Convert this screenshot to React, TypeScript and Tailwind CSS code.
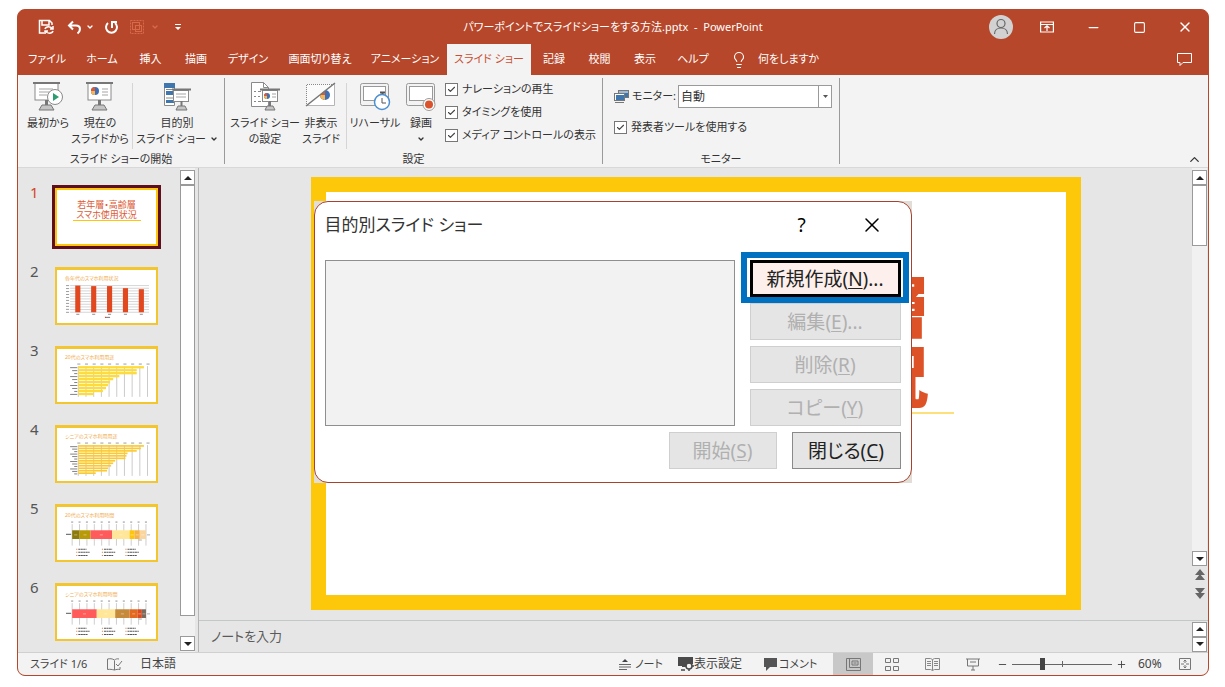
import React, { useState } from 'react';
import { Check, ChevronDown, ChevronUp, Lightbulb, Minus, Plus, Square, X } from 'lucide-react';

type Segment = { x: number; w: number; color: string };

const tabs = [
  { label: 'ファイル', width: 'w-[58px]' },
  { label: 'ホーム', width: 'w-[52px]' },
  { label: '挿入', width: 'w-[45px]' },
  { label: '描画', width: 'w-[46px]' },
  { label: 'デザイン', width: 'w-[58px]' },
  { label: '画面切り替え', width: 'w-[86px]' },
  { label: 'アニメーション', width: 'w-[84px]' },
  { label: 'スライド ショー', width: 'w-[84px]', active: true },
  { label: '記録', width: 'w-[46px]' },
  { label: '校閲', width: 'w-[45px]' },
  { label: '表示', width: 'w-[46px]' },
  { label: 'ヘルプ', width: 'w-[50px]' },
];

/* ---------- Ribbon icons ---------- */

const Pie = ({ cx, cy, r }: { cx: number; cy: number; r: number }) => (
  <g>
    <circle cx={cx} cy={cy} r={r} fill="#3f6fb5" />
    <path d={`M${cx} ${cy}V${cy - r}A${r} ${r} 0 0 0 ${cx} ${cy + r}Z`} fill="#d95a3b" />
    <path d={`M${cx} ${cy}H${cx - r}A${r} ${r} 0 0 0 ${cx} ${cy + r}Z`} fill="#f0b95a" />
  </g>
);

const Easel = () => (
  <g>
    <rect x="3" y="2" width="23" height="17" fill="#fff" stroke="#8a8a8a" />
    <rect x="1" y="1" width="27" height="2" fill="#777" />
    <path d="M14.500 19v6" stroke="#777" strokeWidth="3" />
    <path d="M10 24h9l3 5H7z" fill="#c4c4c4" stroke="#777" />
  </g>
);

const FromStartIcon = () => (
  <svg width="32" height="30" viewBox="0 0 32 30" fill="none">
    <Easel />
    <path d="M7 8h14M7 11h11M7 14h8" stroke="#a5a5a5" />
    <circle cx="23" cy="16" r="7.500" fill="#fff" stroke="#8a8a8a" />
    <path d="M21 12l6 4-6 4z" fill="#2f9b72" />
  </svg>
);

const FromCurrentIcon = () => (
  <svg width="30" height="30" viewBox="0 0 30 30" fill="none">
    <Easel />
    <Pie cx={10} cy={10} r={4} />
    <path d="M17 8h6M17 11h6M17 14h6" stroke="#a5a5a5" />
  </svg>
);

const CustomShowIcon = () => (
  <svg width="30" height="30" viewBox="0 0 30 30" fill="none">
    <path d="M2.500 2.500h10v22h-10z" fill="#fff" stroke="#8a8a8a" />
    <path d="M2 2h11v5H2zM4 10h8v4H4zM4 19h8v3H4z" fill="#3f76ad" />
    <path d="M4 8.500h8M4 17h8" stroke="#8a8a8a" />
    <rect x="11.500" y="9.500" width="15" height="11" fill="#fff" stroke="#8a8a8a" />
    <path d="M10 8.500h19" stroke="#777" strokeWidth="2" />
    <path d="M14 13h10M14 16h10" stroke="#a5a5a5" />
    <path d="M19.500 20v5" stroke="#777" strokeWidth="2" />
    <path d="M16 25h7l2 4H14z" fill="#c4c4c4" stroke="#777" />
  </svg>
);

const SetupIcon = () => (
  <svg width="32" height="30" viewBox="0 0 32 30" fill="none">
    <path d="M2.500 1.500h12l5 5v19h-17z" fill="#fff" stroke="#8a8a8a" />
    <path d="M14.500 1.500v5h5" stroke="#8a8a8a" />
    <path d="M5 10.500h2M5 15.500h2M5 20.500h2M9 10.500h3M9 15.500h2M9 20.500h3" stroke="#888" />
    <rect x="13.500" y="9.500" width="15" height="11" fill="#fff" stroke="#8a8a8a" />
    <path d="M11 8.500h20" stroke="#777" strokeWidth="2" />
    <Pie cx={18} cy={15} r={3} />
    <path d="M23 13h4M23 16h4" stroke="#a5a5a5" />
    <path d="M21 20v5" stroke="#777" strokeWidth="2" />
    <path d="M18 25h6l2 4H16z" fill="#c4c4c4" stroke="#777" />
  </svg>
);

const HideSlideIcon = () => (
  <svg width="32" height="30" viewBox="0 0 32 30" fill="none">
    <path d="M2 3h28v22H2z" fill="#fff" />
    <Pie cx={20} cy={14} r={5} />
    <path d="M2 3h26L2 24z" fill="#fafafa" />
    <path d="M1.500 25V3.500H29" stroke="#888" strokeDasharray="1 1" />
    <path d="M29.500 3v21.500H2" stroke="#b5b5b5" />
    <path d="M1 25L30 2" stroke="#777" strokeWidth="1.500" />
  </svg>
);

const RehearseIcon = () => (
  <svg width="32" height="30" viewBox="0 0 32 30" fill="none">
    <rect x="1.500" y="2.500" width="28" height="22" rx="2" fill="#f3f3f3" stroke="#999" />
    <rect x="4.500" y="5.500" width="22" height="14" fill="#fff" stroke="#999" />
    <path d="M21 11.500h5M23.500 12v3" stroke="#555" strokeWidth="2" />
    <circle cx="23" cy="21" r="7.500" fill="#fff" stroke="#4b8fd0" strokeWidth="1.500" />
    <path d="M23 17v5h4" stroke="#555" />
  </svg>
);

const RecordIcon = () => (
  <svg width="32" height="30" viewBox="0 0 32 30" fill="none">
    <rect x="1.500" y="2.500" width="28" height="22" rx="2" fill="#f3f3f3" stroke="#999" />
    <rect x="4.500" y="5.500" width="23" height="14" fill="#fff" stroke="#999" />
    <circle cx="24" cy="23.500" r="6" fill="#fff" stroke="#999" />
    <circle cx="24" cy="23.500" r="4" fill="#d9532c" />
  </svg>
);

const MonitorsIcon = () => (
  <svg width="15" height="15" viewBox="0 0 15 15" fill="none">
    <rect x="4.500" y="1.500" width="10" height="7" fill="#3f76ad" stroke="#777" />
    <path d="M5 3h9" stroke="#fff" />
    <rect x="1.500" y="5.500" width="9" height="6" fill="#3f76ad" stroke="#fff" />
    <rect x=".5" y="4.500" width="10" height="7" stroke="#777" />
    <path d="M1 13.500h9" stroke="#777" />
  </svg>
);

/* ---------- Small building blocks ---------- */

const RibbonButton = ({ icon, lines, width, menu }: { icon: React.ReactNode; lines: string[]; width: string; menu?: boolean }) => (
  <button className={`flex shrink-0 flex-col items-center whitespace-nowrap text-[11px] leading-4 text-[#333] ${width}`}>
    {icon}
    <span className="mt-1 flex flex-col items-center">
      {lines.map((line, index) => (
        <span key={line} className="flex items-center gap-1">
          {line}
          {menu && lines.length > 1 && index === lines.length - 1 && <ChevronDown size={8} strokeWidth={4} />}
        </span>
      ))}
      {menu && lines.length === 1 && <ChevronDown size={8} strokeWidth={4} className="mt-1" />}
    </span>
  </button>
);

const CheckOption = ({ label }: { label: string }) => {
  const [checked, setChecked] = useState(true);
  return (
    <label className="flex h-[23px] items-center gap-1 whitespace-nowrap text-[11px]">
      <span className="relative flex">
        <input
          type="checkbox"
          checked={checked}
          onChange={() => setChecked(!checked)}
          className="h-[13px] w-[13px] appearance-none border border-[#777] bg-white"
        />
        {checked && <Check size={9} strokeWidth={3} className="pointer-events-none absolute left-0.5 top-0.5 text-[#444]" />}
      </span>
      {label}
    </label>
  );
};

const ScrollButton = ({ up, label }: { up?: boolean; label: string }) => (
  <button aria-label={label} className="flex h-[15px] w-[15px] items-center justify-center border border-[#9a9a9a] bg-white">
    <svg width="8" height="4" viewBox="0 0 8 4">
      <path d={up ? 'M0 4L4 0l4 4z' : 'M0 0l4 4 4-4z'} fill="#222" />
    </svg>
  </button>
);

const RibbonGroup = ({ title, width, children }: { title: string; width: string; children: React.ReactNode }) => (
  <section className={`flex shrink-0 ${width}`}>
    <div className="flex min-w-0 flex-1 flex-col">
      <div className="flex h-[77px] pt-1.5">{children}</div>
      <h2 className="text-center text-[11px] leading-4">{title}</h2>
    </div>
    <div className="my-[3px] w-px bg-[#9a9a9a]" />
  </section>
);

/* ---------- Thumbnails ---------- */

const axis = [0, 1, 2, 3, 4, 5, 6, 7, 8, 9];

const ColumnChart = () => (
  <svg viewBox="0 0 95 40" className="w-full">
    {[...axis, 10].map(i => (
      <path key={i} d={`M12 ${3.500 + i * 2.600}h77`} stroke="#bbb" strokeWidth=".6" />
    ))}
    {axis.map(i => (
      <path key={i} d={`M8 ${3.500 + i * 2.900}h3`} stroke="#888" strokeWidth=".8" />
    ))}
    {[3.500, 4, 4, 6, 7].map((y, i) => (
      <g key={i}>
        <rect x={17 + i * 15.500} y={y} width="5" height={29.500 - y} fill="#e2481f" />
        <path d={`M${18 + i * 15.500} 31.500h3`} stroke="#777" strokeWidth=".8" />
      </g>
    ))}
    <path d="M46 34.500h1" stroke="#e2481f" />
    <path d="M47 34.500h4" stroke="#777" />
  </svg>
);

const BarChart = ({ bars, height, color }: { bars: number[]; height: number; color: string }) => (
  <svg viewBox="0 0 95 40" className="w-full">
    {axis.map(i => (
      <g key={i}>
        <path d={`M${20 + i * 7.500} 5v30`} stroke="#aaa" strokeWidth=".6" />
        <path d={`M${19 + i * 7.500} 3h3`} stroke="#888" strokeWidth=".8" />
      </g>
    ))}
    {bars.map((w, i) => (
      <g key={i}>
        <path d={`M${12 + (i % 3) * 2} ${6.500 + i * (29 / bars.length)}h${7 - (i % 3) * 2}`} stroke="#777" strokeWidth=".9" />
        <rect x="20" y={5 + i * (29 / bars.length)} width={w} height={height} fill={color} />
      </g>
    ))}
  </svg>
);

const StackedChart = ({ segments }: { segments: Segment[] }) => (
  <svg viewBox="0 0 95 40" className="w-full">
    {axis.concat(10).map(i => (
      <g key={i}>
        <path d={`M${14 + i * 7.200} 5v21`} stroke="#bbb" strokeWidth=".7" />
        <path d={`M${13 + i * 7.200} 3h2`} stroke="#777" strokeWidth=".8" />
      </g>
    ))}
    <path d="M8 15h5" stroke="#777" />
    {segments.map(s => (
      <g key={s.x}>
        <rect x={s.x + 1} y="11" width={s.w} height="8.500" fill={s.color} />
        <path d={`M${s.x + s.w / 2 - 0.500} 15.500h3`} stroke="#fff" strokeOpacity=".5" strokeWidth=".8" />
      </g>
    ))}
    <path d="M87 15.500h3M79 20.500h3" stroke="#999" strokeWidth=".8" />
    {[18, 43, 66].map(x => (
      <path key={x} d={`M${x + 2} 29.500h8M${x + 2} 32.500h11M${x + 2} 35.500h9`} stroke="#555" strokeDasharray="2 .4" />
    ))}
    {[18, 43, 66].map(x => (
      <path key={x} d={`M${x} 29.500h1M${x} 32.500h1M${x} 35.500h1`} stroke="#d9783c" />
    ))}
  </svg>
);

const youngSegments: Segment[] = [
  { x: 13, w: 7, color: '#8c7a0c' },
  { x: 20, w: 11, color: '#b89a08' },
  { x: 31, w: 21, color: '#ff5b5b' },
  { x: 52, w: 17, color: '#ffe699' },
  { x: 69, w: 5, color: '#fdc60c' },
  { x: 74, w: 5, color: '#f5b24a' },
  { x: 79, w: 6, color: '#f9d5a0' },
];

const seniorSegments: Segment[] = [
  { x: 13, w: 24, color: '#ff5b5b' },
  { x: 37, w: 18, color: '#ffe699' },
  { x: 55, w: 14, color: '#c58a3c' },
  { x: 69, w: 8, color: '#e2691f' },
  { x: 77, w: 4, color: '#dd4a20' },
  { x: 81, w: 4, color: '#7c6a5c' },
];

const thumbnails = [
  { title: '各年代のスマホ利用状況', chart: <ColumnChart /> },
  { title: '20代のスマホ利用用途', chart: <BarChart bars={[64, 57, 57, 40, 34, 31, 29, 27, 24, 15]} height={2.200} color="#fddb3a" /> },
  { title: 'シニアのスマホ利用用途', chart: <BarChart bars={[64, 61, 57, 48, 47, 46, 36, 34, 32, 29, 28, 17]} height={1.600} color="#fdc92c" /> },
  { title: '20代のスマホ利用時間', chart: <StackedChart segments={youngSegments} /> },
  { title: 'シニアのスマホ利用時間', chart: <StackedChart segments={seniorSegments} /> },
];

const SlidePanel = () => (
  <aside className="flex w-[181px] shrink-0 border-r border-[#b5b5b5]">
    <ol className="flex flex-1 flex-col gap-[21px] pl-3 pt-5 text-[15px] leading-[9px] text-[#555]">
      <li className="flex h-[58px] gap-[15px] text-[#d24726]">
        <span className="w-2.5">1</span>
        <button className="h-[58px] w-[103px] border-2 border-[#fdc60c] bg-white pb-3.5 text-[9px] leading-[10px] text-[#dd5a35] outline-3 outline-[#5e0f1a]">
          <span className="block">若年層・高齢層</span>
          <span className="mx-auto block w-[68px] border-b border-[#fdc60c]">スマホ使用状況</span>
        </button>
      </li>
      {thumbnails.map((slide, index) => (
        <li key={slide.title} className="flex h-[58px] gap-[15px]">
          <span className="w-2.5">{index + 2}</span>
          <button className="flex h-[58px] w-[103px] flex-col items-start border-2 border-t-3 border-[#f3c62f] bg-white pt-1">
            <span className="whitespace-nowrap pl-2 text-[5px] leading-[8px] text-[#f0ab4c]">{slide.title}</span>
            {slide.chart}
          </button>
        </li>
      ))}
    </ol>
    <div className="mr-[3px] flex w-[15px] flex-col bg-[#f1f1f1] pb-px pt-0.5">
      <ScrollButton up label="上へスクロール" />
      <div className="flex-1 border border-[#9a9a9a] bg-white" />
      <div className="h-5" />
      <ScrollButton label="下へスクロール" />
    </div>
  </aside>
);

/* ---------- Dialog ---------- */

const DialogButton = ({ label, shortcut, dots, disabled, width }: { label: string; shortcut: string; dots?: boolean; disabled?: boolean; width: string }) => (
  <button
    disabled={disabled}
    className={`h-[37px] whitespace-nowrap border border-[#8a8a8a] bg-[#e5e5e5] text-[19px] leading-6 text-[#222] disabled:border-[#cfcfcf] disabled:text-[#b0b0b0] ${width}`}
  >
    {label}(<u className="underline-offset-2">{shortcut}</u>){dots && '...'}
  </button>
);

const CustomShowDialog = () => (
  <div className="absolute left-[3px] top-6 w-[598px] bg-[#e3ddd8]">
    <div role="dialog" aria-label="目的別スライド ショー" className="rounded-[14px] border border-[#a8422c] bg-white px-2.5 pb-[13px]">
      <header className="mb-3 flex h-[46px] items-center pr-[17px]">
        <h1 className="flex-1 text-[17px] leading-6 text-[#333]">目的別スライド ショー</h1>
        <button className="w-5 text-[19px] leading-6">?</button>
        <button aria-label="閉じる" className="ml-12">
          <X size={24} strokeWidth={1.500} />
        </button>
      </header>
      <div className="flex gap-[15px]">
        <div role="listbox" aria-label="目的別スライド ショー" className="flex-1 border border-[#8f8f8f] bg-[#f2f2f2]" />
        <div className="flex flex-col gap-1.5">
          <div className="relative z-10">
            <button className="h-[37px] w-[151px] border-3 border-black bg-[#fdf0ec] text-[19px] leading-6 text-[#222]">
              新規作成(<u className="underline-offset-2">N</u>)...
            </button>
            <div className="pointer-events-none absolute -bottom-1.5 -left-[9px] -right-2 -top-2 border-6 border-[#0070c0]" />
          </div>
          <DialogButton label="編集" shortcut="E" dots disabled width="w-[151px]" />
          <DialogButton label="削除" shortcut="R" disabled width="w-[151px]" />
          <DialogButton label="コピー" shortcut="Y" disabled width="w-[151px]" />
        </div>
      </div>
      <footer className="mt-1.5 flex justify-end gap-[15px]">
        <DialogButton label="開始" shortcut="S" disabled width="w-[108px]" />
        <DialogButton label="閉じる" shortcut="C" width="w-[109px]" />
      </footer>
    </div>
  </div>
);

/* ---------- Page sections ---------- */

const TitleBar = () => (
  <header className="grid h-[34px] grid-cols-[1fr_auto_1fr] items-center">
    <div className="flex items-center pl-5">
      <button aria-label="保存">
        <svg width="17" height="17" viewBox="0 0 17 17" fill="none" stroke="#fff" strokeWidth="1.500">
          <path d="M6 14H1.500V1.500h10L14 4v2M4 2v4h7V2" />
          <path d="M7 10c1-3 6-3 7.500 0M15 7v3h-3M15 12c-1 3-6 3-7.500 0M7 15v-3h3" />
        </svg>
      </button>
      <button aria-label="元に戻す" className="ml-3">
        <svg width="15" height="15" viewBox="0 0 15 15" fill="none" stroke="#fff" strokeWidth="2">
          <path d="M6 1.500L2 5.500l4 4M2 5.500h7c5 0 5 5 1.500 8" />
        </svg>
      </button>
      <ChevronDown size={8} strokeWidth={4} className="ml-1 text-white" />
      <button aria-label="やり直し" className="ml-2.5">
        <svg width="15" height="15" viewBox="0 0 15 15" fill="none" stroke="#fff" strokeWidth="2">
          <path d="M4 3a5.500 5.500 0 1 0 7 0M8 8V2h5" />
        </svg>
      </button>
      <button aria-label="グループ化" className="ml-2.5">
        <svg width="16" height="16" viewBox="0 0 16 16" fill="none" stroke="#d9694b">
          <rect x="1.500" y="1.500" width="13" height="13" strokeDasharray="2 1" />
          <rect x="3.500" y="3.500" width="7" height="7" />
          <rect x="6.500" y="6.500" width="6" height="6" />
        </svg>
      </button>
      <ChevronDown size={8} strokeWidth={4} className="ml-1.5 text-[#d9694b]" />
      <button aria-label="クイック アクセス ツール バーのユーザー設定" className="ml-4">
        <svg width="6" height="6" viewBox="0 0 6 6">
          <path d="M0 0h6v1H0zM0 3h6L3 6z" fill="#fff" />
        </svg>
      </button>
    </div>
    <p className="whitespace-pre text-[11px] text-white">パワーポイントでスライドショーをする方法.pptx  -  PowerPoint</p>
    <div className="flex items-center justify-end pr-[15px] text-white">
      <button aria-label="アカウント" className="flex h-6 w-6 justify-center rounded-full bg-[#d2d2d2]">
        <svg width="24" height="24" viewBox="0 0 24 24" fill="none" stroke="#666" strokeWidth="1.200">
          <circle cx="12" cy="8.500" r="4" />
          <path d="M5.500 19c0-8 13-8 13 0" />
        </svg>
      </button>
      <button aria-label="リボンの表示オプション" className="ml-[27px]">
        <svg width="14" height="12" viewBox="0 0 14 12" fill="none" stroke="#fff" strokeWidth="1.200">
          <path d="M.6 1h12.800v10H.6zM1 3.500h12M7 10V5M4.500 7L7 4.800 9.500 7" />
        </svg>
      </button>
      <button aria-label="最小化" className="ml-8"><Minus size={15} strokeWidth={2} /></button>
      <button aria-label="最大化" className="ml-8"><Square size={13} strokeWidth={2} /></button>
      <button aria-label="閉じる" className="ml-[31px]"><X size={16} strokeWidth={2} /></button>
    </div>
  </header>
);

const TabBar = () => (
  <nav className="flex h-[31px] items-stretch pr-4 text-[11px] text-white">
    {tabs.map(tab => (
      <button
        key={tab.label}
        className={`flex shrink-0 items-center justify-center whitespace-nowrap ${tab.width} ${tab.active ? 'bg-[#f3f3f3] text-[#c94f32]' : ''}`}
      >
        {tab.label}
      </button>
    ))}
    <button className="ml-3 flex items-center gap-2.5 whitespace-nowrap">
      <Lightbulb size={18} strokeWidth={1.500} />
      何をしますか
    </button>
    <button aria-label="コメント" className="ml-auto">
      <svg width="15" height="14" viewBox="0 0 15 14" fill="none" stroke="#fff">
        <path d="M.5.5h14v9H6L3 12.500v-3H.5z" />
      </svg>
    </button>
  </nav>
);

const Ribbon = () => (
  <div className="flex h-[93px] border-b border-[#d8d8d8] bg-[#f3f3f3] text-[#333]">
    <RibbonGroup title="スライド ショーの開始" width="w-[207px]">
      <div className="flex pl-1.5">
        <RibbonButton icon={<FromStartIcon />} lines={['最初から']} width="w-[48px]" />
        <RibbonButton icon={<FromCurrentIcon />} lines={['現在の', 'スライドから']} width="w-[56px]" />
        <div className="mx-1 my-0.5 w-px bg-[#d5d5d5]" />
        <RibbonButton icon={<CustomShowIcon />} lines={['目的別', 'スライド ショー']} width="w-[80px]" menu />
      </div>
    </RibbonGroup>
    <RibbonGroup title="設定" width="w-[378px]">
      <div className="flex pl-[7px]">
        <RibbonButton icon={<SetupIcon />} lines={['スライド ショー', 'の設定']} width="w-[66px]" />
        <RibbonButton icon={<HideSlideIcon />} lines={['非表示', 'スライド']} width="w-[46px]" />
        <div className="mx-0.5 my-0.5 w-px bg-[#d5d5d5]" />
        <RibbonButton icon={<RehearseIcon />} lines={['リハーサル']} width="w-[52px]" />
        <RibbonButton icon={<RecordIcon />} lines={['録画']} width="w-[40px]" menu />
        <div className="-mt-[3px] ml-1">
          <CheckOption label="ナレーションの再生" />
          <CheckOption label="タイミングを使用" />
          <CheckOption label="メディア コントロールの表示" />
        </div>
      </div>
    </RibbonGroup>
    <RibbonGroup title="モニター" width="w-[237px]">
      <div className="flex flex-1 flex-col gap-2 pl-[11px] pr-[7px] pt-1">
        <div className="flex items-center text-[11px]">
          <MonitorsIcon />
          <label htmlFor="monitor" className="ml-[3px] w-[46px] shrink-0 whitespace-nowrap">モニター:</label>
          <div className="relative flex flex-1">
            <select id="monitor" className="h-[23px] w-full appearance-none border border-[#9a9a9a] bg-white pl-0.5 text-xs">
              <option>自動</option>
            </select>
            <span className="pointer-events-none absolute inset-y-0 right-0 flex w-3.5 items-center justify-center border border-[#9a9a9a]">
              <svg width="5" height="3" viewBox="0 0 5 3"><path d="M0 0h5L2.500 3z" fill="#555" /></svg>
            </span>
          </div>
        </div>
        <CheckOption label="発表者ツールを使用する" />
      </div>
    </RibbonGroup>
    <button aria-label="リボンを折りたたむ" className="ml-auto mr-1.5 self-end">
      <ChevronUp size={15} strokeWidth={2} />
    </button>
  </div>
);

const Editor = () => (
  <main className="flex min-w-0 flex-1 flex-col">
    <div className="flex flex-1">
      <div className="flex flex-1 justify-center pt-[9px] pb-2.5">
        <div className="relative w-full max-w-[770px]">
          <div className="flex h-[433px] flex-col items-center border-15 border-[#fdc80a] bg-white pt-[76px]">
            <p className="border-b-2 border-[#fde07a] px-6 pb-1 text-center font-['Noto_Sans_CJK_JP',sans-serif] text-[67px] font-black leading-[70px] text-[#dd5226] [font-feature-settings:normal]">
              若年層・高齢層
              <br />
              スマホ使用状況
            </p>
          </div>
          <CustomShowDialog />
        </div>
      </div>
      <div className="mr-px flex w-[15px] flex-col items-center bg-[#f1f1f1] pt-0.5">
        <ScrollButton up label="上へスクロール" />
        <div className="h-[61px] w-[15px] border border-[#9a9a9a] bg-white" />
        <div className="flex-1" />
        <ScrollButton label="下へスクロール" />
        <div className="flex w-full flex-col items-center gap-1 bg-[#e6e6e6] pb-[21px] pt-[3px]">
          <button aria-label="前のスライド">
            <svg width="10" height="13" viewBox="0 0 10 13"><path d="M5 0l5 6H0zM5 5l5 6H0z" fill="#666" /></svg>
          </button>
          <button aria-label="次のスライド">
            <svg width="10" height="13" viewBox="0 0 10 13"><path d="M5 13l5-6H0zM5 8l5-6H0z" fill="#666" /></svg>
          </button>
        </div>
      </div>
    </div>
    <div className="flex h-8 items-center border-t border-[#c2c7c7] pl-3">
      <input
        aria-label="ノート"
        placeholder="ノートを入力"
        className="min-w-0 flex-1 bg-transparent text-[13px] placeholder:text-[#5a5a5a]"
      />
      <div className="mr-px flex flex-col">
        <ScrollButton up label="ノートを上へ" />
        <ScrollButton label="ノートを下へ" />
      </div>
    </div>
  </main>
);

const StatusBar = () => {
  const [zoom, setZoom] = useState(29);
  return (
    <footer className="flex h-[23px] items-center whitespace-nowrap border-t border-[#d0d0d0] bg-[#f3f3f3] pl-3 pr-[17px] text-xs text-[#444]">
      <span className="w-[77px] text-[11px]">スライド 1/6</span>
      <svg width="16" height="13" viewBox="0 0 16 13" fill="none" stroke="#777">
        <path d="M7.500 2.500V12M7.500 2C5 .5 3 .5.500 1v10.500c2.500-.5 4.500 0 7 .5 2-.5 3-1 5.500-.5V9M7.500 2C9 1 10 .5 12 1M9 6l2 2 4-5" />
      </svg>
      <span className="ml-[17px]">日本語</span>
      <button className="ml-auto flex w-[59px] items-center gap-1 text-[11px]">
        <svg width="12" height="12" viewBox="0 0 12 12" fill="none" stroke="#666">
          <path d="M6 1l3 3H3z" fill="#444" stroke="none" />
          <path d="M0 6.500h12M0 9h12M0 11.500h8" />
        </svg>
        ノート
      </button>
      <button className="flex w-[85px] items-center">
        <svg width="16" height="14" viewBox="0 0 16 14" fill="none">
          <path d="M0 0h15v7h-4l-4 3H4v-1H0z" fill="#4a4a4a" />
          <circle cx="11" cy="9" r="3" fill="#f3f3f3" stroke="#4a4a4a" strokeWidth="1.500" />
          <path d="M11 4.500v2M11 12v2M6.500 9h2M14 9h2M3 13h4" stroke="#4a4a4a" strokeWidth="1.500" />
        </svg>
        表示設定
      </button>
      <button className="flex w-[70px] items-center gap-px text-[11px]">
        <svg width="15" height="13" viewBox="0 0 15 13">
          <path d="M1 0h13v9H7l-4 4V9H1z" fill="#555" />
        </svg>
        コメント
      </button>
      <button aria-label="標準" className="flex h-[22px] w-10 items-center justify-center bg-[#c8c8c8]">
        <svg width="15" height="13" viewBox="0 0 15 13" fill="none" stroke="#777">
          <path d="M.5.500h14v12H.5zM3.500.500v9M3.500 9.500h11M6 3h6v4H6zM7.500 5h3" />
        </svg>
      </button>
      <button aria-label="スライド一覧" className="ml-3">
        <svg width="14" height="13" viewBox="0 0 14 13" fill="none" stroke="#777">
          <path d="M.5.500h5v4h-5zM8.500.500h5v4h-5zM.5 8.500h5v4h-5zM8.500 8.500h5v4h-5z" />
        </svg>
      </button>
      <button aria-label="閲覧表示" className="ml-[26px]">
        <svg width="15" height="13" viewBox="0 0 15 13" fill="none" stroke="#888">
          <path d="M7.500 1.500v11M.5.500h5l2 1 2-1h5v11h-5l-2 1-2-1h-5zM2 3.500h4M2 5.500h4M2 7.500h4M9 3.500h4M9 5.500h4M9 7.500h4" />
        </svg>
      </button>
      <button aria-label="スライド ショー" className="ml-[26px]">
        <svg width="14" height="13" viewBox="0 0 14 13" fill="none" stroke="#777">
          <path d="M0 1h14M1.500 1v7h11V1M4 4h6M7 8v4M5 12h4" />
        </svg>
      </button>
      <button aria-label="縮小" className="ml-[17px]"><Minus size={11} strokeWidth={2} /></button>
      <div className="relative mx-1 flex w-[100px] items-center">
        <input
          type="range"
          aria-label="ズーム"
          value={zoom}
          onChange={e => setZoom(Number(e.target.value))}
          className="h-3 w-full appearance-none bg-[linear-gradient(#666,#666)] bg-[length:100%_1px] bg-center bg-no-repeat [&::-webkit-slider-thumb]:h-3 [&::-webkit-slider-thumb]:w-[5px] [&::-webkit-slider-thumb]:appearance-none [&::-webkit-slider-thumb]:bg-[#444]"
        />
        <span className="pointer-events-none absolute left-1/2 h-1.5 w-px bg-[#666]" />
      </div>
      <button aria-label="拡大"><Plus size={11} strokeWidth={2} /></button>
      <span className="ml-[11px] w-[41px]">60%</span>
      <button aria-label="ウィンドウに合わせる">
        <svg width="12" height="12" viewBox="0 0 12 12" fill="none" stroke="#777">
          <path d="M.5.500h11v11H.5zM6 2v3M6 7v3M2 6h3M7 6h3M4.500 3.500L6 2l1.500 1.500M4.500 8.500L6 10l1.500-1.500" />
        </svg>
      </button>
    </footer>
  );
};

const App: React.FC = () => (
  <div className="flex min-h-screen bg-white pb-3 pl-[17px] pr-4 pt-[9px] font-['Noto_Sans','Noto_Sans_CJK_JP',sans-serif] [font-feature-settings:'palt']">
    <div className="flex min-w-0 flex-1 flex-col overflow-hidden rounded-lg border border-[#b7472a] bg-[#b7472a]">
      <TitleBar />
      <TabBar />
      <Ribbon />
      <div className="flex flex-1 bg-[#e6e6e6]">
        <SlidePanel />
        <Editor />
      </div>
      <StatusBar />
    </div>
  </div>
);

export default App;
